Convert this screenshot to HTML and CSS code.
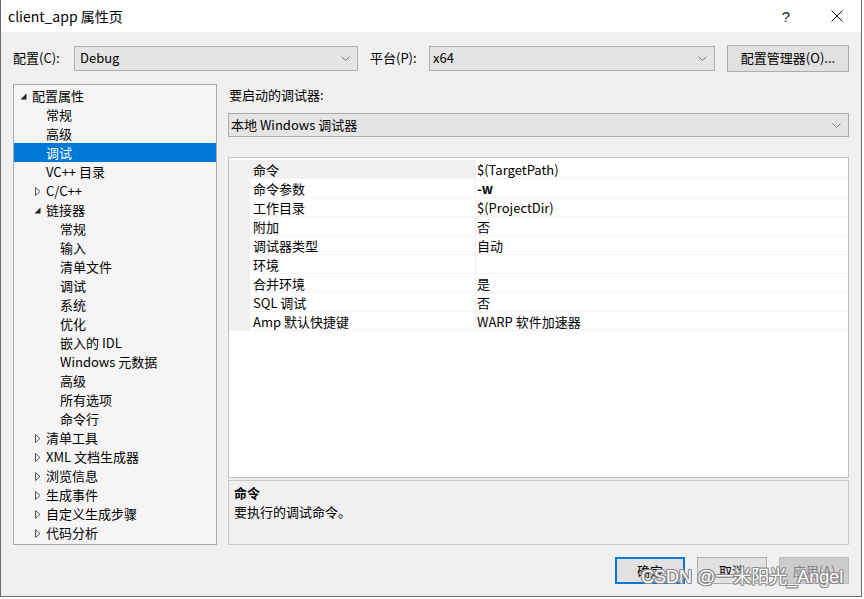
FILE: index.html
```html
<!DOCTYPE html>
<html lang="zh-CN">
<head>
<meta charset="utf-8">
<title>client_app 属性页</title>
<link rel="stylesheet" href="styles.css">
</head>
<body>
<div class="window">
  <div class="titlebar">
    <span class="title">client_app 属性页</span>
    <span class="tb-btn help">?</span>
    <span class="tb-btn close"><svg width="12" height="12" viewBox="0 0 12 12"><path d="M0.5 0.5 L11.5 11.5 M11.5 0.5 L0.5 11.5" stroke="#111" stroke-width="1" fill="none"/></svg></span>
  </div>
  <div class="content">
    <div class="toprow">
      <span class="lbl lbl-conf">配置(C):</span>
      <div class="combo combo-conf"><span>Debug</span><svg class="chev" width="9" height="5" viewBox="0 0 9 5"><polyline points="0.5,0.5 4.5,4.5 8.5,0.5" fill="none" stroke="#7a7a7a" stroke-width="1"/></svg></div>
      <span class="lbl lbl-plat">平台(P):</span>
      <div class="combo combo-plat"><span>x64</span><svg class="chev" width="9" height="5" viewBox="0 0 9 5"><polyline points="0.5,0.5 4.5,4.5 8.5,0.5" fill="none" stroke="#7a7a7a" stroke-width="1"/></svg></div>
      <div class="btn btn-mgr">配置管理器(O)...</div>
    </div>
    <div class="main">
      <div class="tree">
        <div class="trow l0"><span class="slot"><svg class="exp" width="7" height="7" viewBox="0 0 7 7"><polygon points="6.5,0.5 6.5,6.5 0.5,6.5" fill="#222"/></svg></span>配置属性</div>
        <div class="trow l1"><span class="slot"></span>常规</div>
        <div class="trow l1"><span class="slot"></span>高级</div>
        <div class="trow l1 sel"><span class="slot"></span>调试</div>
        <div class="trow l1"><span class="slot"></span>VC++ 目录</div>
        <div class="trow l1"><span class="slot"><svg class="col" width="6" height="9" viewBox="0 0 6 9"><polygon points="0.5,0.5 5,4.5 0.5,8.5" fill="none" stroke="#555" stroke-width="1"/></svg></span>C/C++</div>
        <div class="trow l1"><span class="slot"><svg class="exp" width="7" height="7" viewBox="0 0 7 7"><polygon points="6.5,0.5 6.5,6.5 0.5,6.5" fill="#222"/></svg></span>链接器</div>
        <div class="trow l2"><span class="slot"></span>常规</div>
        <div class="trow l2"><span class="slot"></span>输入</div>
        <div class="trow l2"><span class="slot"></span>清单文件</div>
        <div class="trow l2"><span class="slot"></span>调试</div>
        <div class="trow l2"><span class="slot"></span>系统</div>
        <div class="trow l2"><span class="slot"></span>优化</div>
        <div class="trow l2"><span class="slot"></span>嵌入的 IDL</div>
        <div class="trow l2"><span class="slot"></span>Windows 元数据</div>
        <div class="trow l2"><span class="slot"></span>高级</div>
        <div class="trow l2"><span class="slot"></span>所有选项</div>
        <div class="trow l2"><span class="slot"></span>命令行</div>
        <div class="trow l1"><span class="slot"><svg class="col" width="6" height="9" viewBox="0 0 6 9"><polygon points="0.5,0.5 5,4.5 0.5,8.5" fill="none" stroke="#555" stroke-width="1"/></svg></span>清单工具</div>
        <div class="trow l1"><span class="slot"><svg class="col" width="6" height="9" viewBox="0 0 6 9"><polygon points="0.5,0.5 5,4.5 0.5,8.5" fill="none" stroke="#555" stroke-width="1"/></svg></span>XML 文档生成器</div>
        <div class="trow l1"><span class="slot"><svg class="col" width="6" height="9" viewBox="0 0 6 9"><polygon points="0.5,0.5 5,4.5 0.5,8.5" fill="none" stroke="#555" stroke-width="1"/></svg></span>浏览信息</div>
        <div class="trow l1"><span class="slot"><svg class="col" width="6" height="9" viewBox="0 0 6 9"><polygon points="0.5,0.5 5,4.5 0.5,8.5" fill="none" stroke="#555" stroke-width="1"/></svg></span>生成事件</div>
        <div class="trow l1"><span class="slot"><svg class="col" width="6" height="9" viewBox="0 0 6 9"><polygon points="0.5,0.5 5,4.5 0.5,8.5" fill="none" stroke="#555" stroke-width="1"/></svg></span>自定义生成步骤</div>
        <div class="trow l1"><span class="slot"><svg class="col" width="6" height="9" viewBox="0 0 6 9"><polygon points="0.5,0.5 5,4.5 0.5,8.5" fill="none" stroke="#555" stroke-width="1"/></svg></span>代码分析</div>
      </div>
      <div class="right">
        <div class="dbg-label">要启动的调试器:</div>
        <div class="combo combo-dbg"><span>本地 Windows 调试器</span><svg class="chev" width="9" height="5" viewBox="0 0 9 5"><polyline points="0.5,0.5 4.5,4.5 8.5,0.5" fill="none" stroke="#7a7a7a" stroke-width="1"/></svg></div>
        <div class="grid">
          <div class="prow sel"><span class="gut"></span><span class="pname">命令</span><span class="pval">$(TargetPath)</span></div>
          <div class="prow"><span class="gut"></span><span class="pname">命令参数</span><span class="pval bold">-w</span></div>
          <div class="prow"><span class="gut"></span><span class="pname">工作目录</span><span class="pval">$(ProjectDir)</span></div>
          <div class="prow"><span class="gut"></span><span class="pname">附加</span><span class="pval">否</span></div>
          <div class="prow"><span class="gut"></span><span class="pname">调试器类型</span><span class="pval">自动</span></div>
          <div class="prow"><span class="gut"></span><span class="pname">环境</span><span class="pval"></span></div>
          <div class="prow"><span class="gut"></span><span class="pname">合并环境</span><span class="pval">是</span></div>
          <div class="prow"><span class="gut"></span><span class="pname">SQL 调试</span><span class="pval">否</span></div>
          <div class="prow"><span class="gut"></span><span class="pname">Amp 默认快捷键</span><span class="pval">WARP 软件加速器</span></div>
        </div>
        <div class="desc">
          <div class="desc-title">命令</div>
          <div class="desc-text">要执行的调试命令。</div>
        </div>
      </div>
    </div>
    <div class="buttons">
      <div class="btn dlg default">确定</div>
      <div class="btn dlg">取消</div>
      <div class="btn dlg disabled">应用(A)</div>
    </div>
  </div>
  <div class="watermark">CSDN @一米阳光_Angel</div>
</div>
</body>
</html>
```
FILE: styles.css
```css
* { box-sizing: border-box; margin: 0; padding: 0; }
html, body { background: #fff; }
body {
  width: 864px;
  height: 599px;
  overflow: hidden;
  font-family: "Noto Sans CJK SC", "Noto Sans", sans-serif;
  font-size: 13px;
  color: #000;
}
.window {
  position: relative;
  width: 862px;
  height: 597px;
  border-left: 1px solid #6b6b6b;
  border-right: 1px solid #6b6b6b;
  border-bottom: 1px solid #6b6b6b;
  background: #f0f0f0;
  display: flex;
  flex-direction: column;
}
.titlebar {
  height: 32px;
  background: #fff;
  display: flex;
  align-items: center;
  padding-left: 7px;
  padding-right: 1px;
  flex: none;
}
.title { font-size: 14px; line-height: 20px; flex: 1; }
.tb-btn {
  width: 46px;
  height: 32px;
  display: flex;
  align-items: center;
  justify-content: center;
}
.help { font-family: "Liberation Sans", sans-serif; font-size: 15px; color: #222; margin-right: 5px; }
.content {
  flex: 1;
  padding: 12px 12px 12px 12px;
  display: flex;
  flex-direction: column;
}
.toprow {
  height: 28px;
  display: flex;
  align-items: center;
  flex: none;
}
.lbl { line-height: 20px; }
.lbl-conf { width: 61px; }
.lbl-plat { width: 59px; margin-left: 12px; }
.combo {
  height: 25px;
  border: 1px solid #acacac;
  background: #e5e5e5;
  display: flex;
  align-items: center;
  justify-content: space-between;
  padding: 0 7px 0 5px;
  line-height: 20px;
}
.combo-conf { width: 284px; }
.combo-plat { width: 286px; padding-left: 3px; }
.chev { flex: none; }
.btn {
  background: #e1e1e1;
  border: 1px solid #adadad;
  display: flex;
  align-items: center;
  justify-content: center;
  line-height: 20px;
}
.btn-mgr { width: 122px; height: 27px; margin-left: 12px; }
.main {
  margin-top: 12px;
  height: 461px;
  display: flex;
  gap: 11px;
  flex: none;
}
.tree {
  width: 204px;
  border: 1px solid #a9a9a9;
  background: #f5f5f5;
  padding-top: 1px;
}
.trow {
  height: 19px;
  line-height: 19px;
  display: flex;
  align-items: center;
  white-space: nowrap;
}
.trow.l0 { padding-left: 4px; }
.trow.l1 { padding-left: 18px; }
.trow.l2 { padding-left: 32px; }
.trow.sel { background: #0078d7; color: #fff; }
.slot {
  width: 14px;
  height: 19px;
  flex: none;
  display: flex;
  align-items: center;
}
.slot .exp { margin-left: 2px; margin-top: 2px; }
.slot .col { margin-left: 3px; margin-top: 1px; }
.right {
  width: 621px;
  display: flex;
  flex-direction: column;
}
.dbg-label { margin-top: 1px; height: 19px; line-height: 19px; padding-left: 1px; }
.combo-dbg { margin-top: 9px; height: 24px; padding-left: 2px; }
.grid {
  margin-top: 20px;
  height: 321px;
  border: 1px solid #c2c2c2;
  background: #fff;
  padding-top: 2px;
  flex: none;
}
.prow {
  display: flex;
  height: 19px;
  line-height: 19px;
}
.gut { width: 21px; background: #f0f0f0; flex: none; }
.pname {
  width: 226px;
  padding-left: 3px;
  border-bottom: 1px solid #f4f4f4;
  border-right: 1px solid #f0f0f0;
  flex: none;
}
.prow.sel .pname { background: #f0f0f0; }
.pval {
  flex: 1;
  padding-left: 1px;
  border-bottom: 1px solid #f4f4f4;
}
.bold { font-weight: 700; }
.desc {
  margin-top: 2px;
  height: 65px;
  border: 1px solid #c9c9c9;
  background: #f0f0f0;
  padding: 2px 5px;
  flex: none;
}
.desc-title { font-weight: 700; line-height: 19px; }
.desc-text { line-height: 19px; }
.buttons {
  margin-top: 12px;
  height: 27px;
  display: flex;
  justify-content: flex-end;
  gap: 12px;
  flex: none;
}
.dlg { width: 70px; height: 27px; }
.dlg.default { border: 2px solid #0078d7; }
.dlg.disabled { background: #cccccc; border-color: #bfbfbf; color: #838383; }
.watermark {
  position: absolute;
  left: 640px;
  top: 566px;
  font-family: "Liberation Sans", "Noto Sans CJK SC", sans-serif;
  font-size: 18px;
  line-height: 22px;
  color: #fff;
  white-space: nowrap;
  text-shadow: 1px 0 0 #888, -1px 0 0 #888, 0 1px 0 #888, 0 -1px 0 #888, 1px 1px 0 #999, -1px -1px 0 #999, 1px -1px 0 #999, -1px 1px 0 #999;
}
```
